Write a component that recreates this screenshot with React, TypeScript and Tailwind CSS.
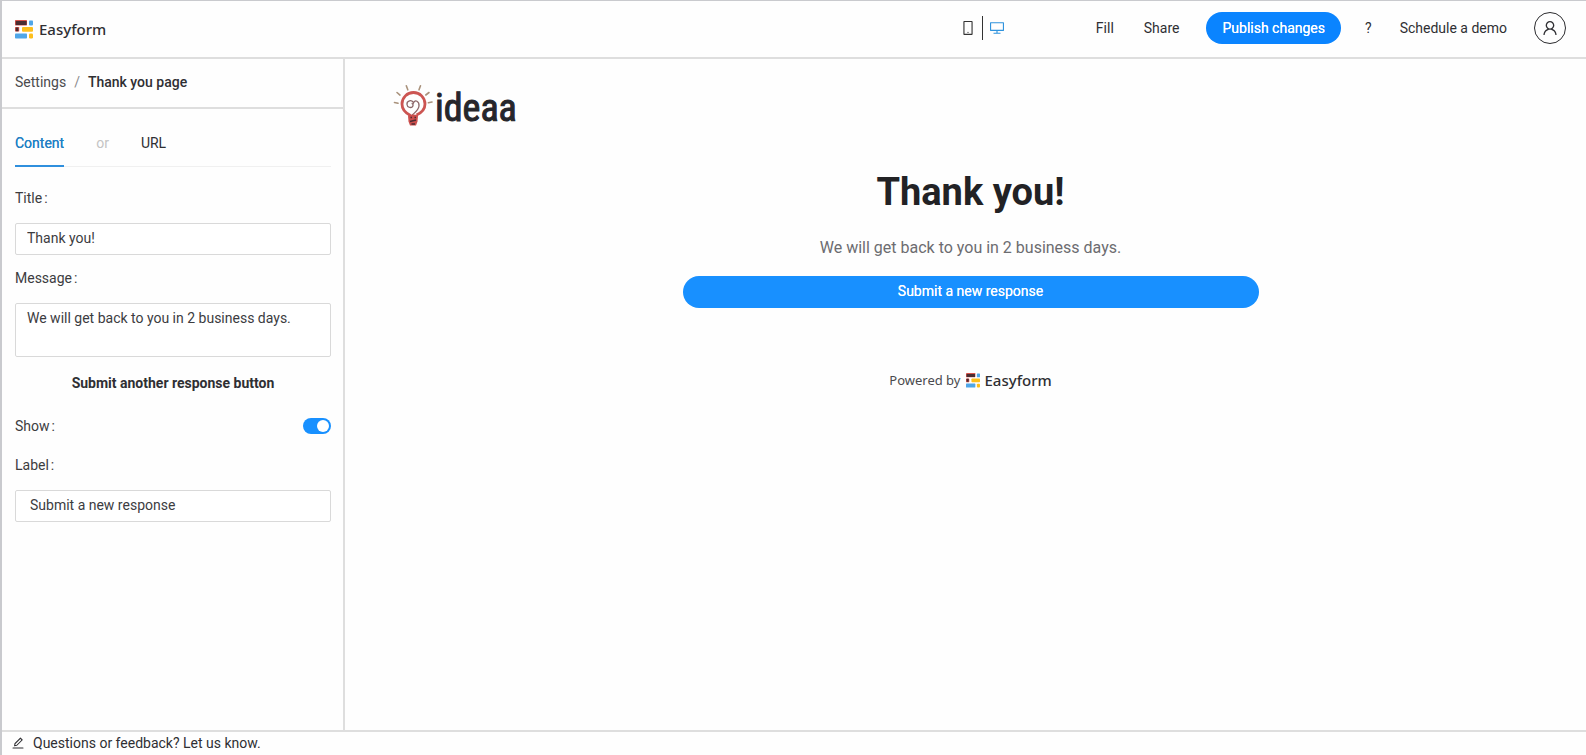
import { useState } from "react";
import {
  AiOutlineDesktop,
  AiOutlineEdit,
  AiOutlineMobile,
  AiOutlineUser,
} from "react-icons/ai";

function BrandMark({ className }: { className: string }) {
  return (
    <svg viewBox="0 0 18 19" className={className} aria-hidden="true">
      <rect x="0" y="0" width="12" height="5.4" rx="0.6" fill="#d9534a" />
      <rect x="0.8" y="1" width="10.8" height="4" rx="0.4" fill="#4a2c30" />
      <rect x="14" y="0.4" width="4" height="5" rx="0.8" fill="#4fa6e8" />
      <rect x="0" y="7" width="4.2" height="4.6" rx="0.6" fill="#d9534a" />
      <rect x="0.8" y="7.4" width="2.6" height="3.8" rx="0.4" fill="#4a2c30" />
      <rect x="7" y="7" width="11" height="4.8" rx="1" fill="#fdbf1c" />
      <rect x="0" y="13.4" width="12" height="5.2" rx="0.8" fill="#4fa6e8" />
      <rect x="14" y="13.6" width="4" height="4.8" rx="1.2" fill="#fdbf1c" />
    </svg>
  );
}

function Bulb() {
  return (
    <svg viewBox="0 0 40 42" className="h-[42px] w-10 shrink-0" fill="none" aria-hidden="true">
      <g stroke="#a9927c" strokeWidth="1.6" strokeLinecap="round">
        <path d="M1.500 18.500 5 19.300M4 8.500l3 2.600M13.300 1.800l1.500 4M27.500 1.800l-1.500 4M36 8.500l-3.200 2.500M39 18l-3.600.8" />
      </g>
      <path
        d="M17.500 31.500C11.500 28.500 9 25 9 20a11.500 11.500 0 1 1 23 0c0 5-3 8.500-8.500 11"
        stroke="#cc5552"
        strokeWidth="2.800"
      />
      <path
        d="M18.500 32c1.500-2.500 7-5 7.500-10 .4-4.600-4-7-5.500-3.200-1.500-3.800-7-2.200-6.500 1.700.3 2.800 3.700 3.800 5.400 2.200 1.300-1.300.5-3.200-.8-3.400"
        stroke="#8b6668"
        strokeWidth="1.300"
      />
      <path d="M15 31.500c3-1.500 7-1.500 10 0l-.5 6-1.500 4h-6l-1.500-4z" fill="#cc4f4d" />
      <path d="M17.500 33.500h1.500M21.500 33.500H23M17 37.500l6-1.500M18.500 40h3.500" stroke="#4c2c33" strokeWidth="1.300" />
    </svg>
  );
}

const labelClass = "block text-sm leading-[22px] text-[#3c3c3f]";
const fieldClass =
  "block w-full rounded-xs border border-[#d9d9d9] bg-white text-sm leading-[22px] text-[#3c3c3f] outline-none focus:border-[#1890ff]";

export default function App() {
  const [title, setTitle] = useState("Thank you!");
  const [message, setMessage] = useState("We will get back to you in 2 business days.");
  const [show, setShow] = useState(true);
  const [label, setLabel] = useState("Submit a new response");

  return (
    <div className="flex min-h-screen flex-col border-t border-l-2 border-[#c9cace] bg-[#fefefe] font-['Roboto',sans-serif] text-sm text-[#2f2f33]">
      <header className="flex h-[58px] items-center justify-between border-b-2 border-[#dedede] pr-5 pl-[13px]">
        <a href="#home" className="flex items-center gap-1.5">
          <BrandMark className="h-[19px] w-[18px]" />
          <span className="font-['Noto_Sans',sans-serif] text-[15px] leading-6 font-medium">Easyform</span>
        </a>
        <div className="flex items-center pb-0.5">
          <div className="mr-[91px] flex items-center">
            <button type="button" aria-label="Mobile preview" className="text-[#333]">
              <AiOutlineMobile size={16} />
            </button>
            <span className="mr-1.5 ml-1.5 h-6 w-px bg-[#333]" />
            <button type="button" aria-label="Desktop preview" className="text-[#2f93dd]">
              <AiOutlineDesktop size={16} />
            </button>
          </div>
          <nav className="flex items-center">
            <a href="#fill" className="mr-[30px]">Fill</a>
            <a href="#share" className="mr-[27px]">Share</a>
            <button type="button" className="mr-6 h-8 rounded-full bg-[#0a84ff] px-4 text-white text-shadow-[0_0_0.25px_currentColor]">
              Publish changes
            </button>
            <a href="#help" className="mr-7">?</a>
            <a href="#demo" className="mr-[27px]">Schedule a demo</a>
            <button
              type="button"
              aria-label="Account"
              className="flex size-8 items-center justify-center rounded-full border border-[#2b2b2e]"
            >
              <AiOutlineUser size={18} />
            </button>
          </nav>
        </div>
      </header>

      <div className="flex grow">
        <aside className="w-[343px] shrink-0 border-r-2 border-[#dedede]">
          <nav className="flex h-[50px] items-center border-b-2 border-[#dedede] px-[13px] pb-0.5" aria-label="Breadcrumb">
            <a href="#settings" className="text-[#4a4a4d]">Settings</a>
            <span className="mx-2 text-[#8c8c8c]">/</span>
            <span className="font-medium">Thank you page</span>
          </nav>
          <div className="pt-[11px] pr-3 pb-6 pl-[13px]">
            <div role="tablist" className="flex border-b border-[#f0f0f0] leading-[22px]">
              <button type="button" role="tab" aria-selected="true" className="-mb-px mr-8 border-b-2 border-[#2f8fdd] pt-3 pb-[11px] text-[#2380c4] text-shadow-[0_0_0.25px_currentColor]">
                Content
              </button>
              <span className="mr-8 py-3 text-[#c4c4c4]">or</span>
              <button type="button" role="tab" aria-selected="false" className="py-3">
                URL
              </button>
            </div>

            <div className="mt-5">
              <label htmlFor="title" className={labelClass}>Title<span className="ml-0.5">:</span></label>
              <input
                id="title"
                value={title}
                onChange={(e) => setTitle(e.target.value)}
                className={`${fieldClass} mt-3.5 h-8 px-[11px] pb-0.5`}
              />
            </div>
            <div className="mt-3">
              <label htmlFor="message" className={labelClass}>Message<span className="ml-0.5">:</span></label>
              <textarea
                id="message"
                value={message}
                onChange={(e) => setMessage(e.target.value)}
                className={`${fieldClass} mt-3.5 h-[54px] resize-none px-[11px] pt-[3px]`}
              />
            </div>
            <h2 className="mt-[15px] text-center leading-[22px] font-bold">Submit another response button</h2>
            <div className="mt-[21px] flex items-center justify-between">
              <label htmlFor="show" className={labelClass}>Show<span className="ml-0.5">:</span></label>
              <input
                id="show"
                type="checkbox"
                role="switch"
                checked={show}
                onChange={(e) => setShow(e.target.checked)}
                className="flex h-4 w-7 cursor-pointer appearance-none items-center rounded-full bg-[#bfbfbf] px-0.5 before:size-3 before:rounded-full before:bg-white before:content-[''] checked:justify-end checked:bg-[#1890ff]"
              />
            </div>
            <div className="mt-[17px]">
              <label htmlFor="label" className={labelClass}>Label<span className="ml-0.5">:</span></label>
              <input
                id="label"
                value={label}
                onChange={(e) => setLabel(e.target.value)}
                className={`${fieldClass} mt-3.5 h-8 px-3.5 pb-0.5`}
              />
            </div>
          </div>
        </aside>

        <main className="min-w-0 grow pl-2.5">
          <div className="flex items-start gap-0.5 pt-[25px] pl-[38px]">
            <Bulb />
            <span className="font-['Roboto_Condensed','Liberation_Sans_Narrow',sans-serif] text-[38px] leading-[49px] text-[#26262b] [-webkit-text-stroke:1px_#26262b]">
              ideaa
            </span>
          </div>
          <div className="mx-auto flex w-full max-w-[576px] flex-col items-center pt-9">
            <h1 className="text-[38px] leading-[47px] font-bold text-[#222225]">{title}</h1>
            <p className="mt-5 text-base leading-6 text-[#6c6c70]">{message}</p>
            {show && (
              <button type="button" className="mt-4 h-8 w-full rounded-full bg-[#1890ff] pb-0.5 text-white text-shadow-[0_0_0.25px_currentColor]">
                {label}
              </button>
            )}
            <div className="mt-[60px] flex items-center font-['Noto_Sans',sans-serif] leading-6">
              <span className="text-[13px] text-[#4a4a4d]">Powered by</span>
              <BrandMark className="mr-1 ml-1.5 h-[15px] w-3.5" />
              <span className="text-[15px] font-medium">Easyform</span>
            </div>
          </div>
        </main>
      </div>

      <footer className="flex h-[25px] items-center border-t-2 border-[#dedede] pb-0.5 pl-[9px]">
        <a href="#feedback" className="flex items-center gap-2">
          <AiOutlineEdit size={14} />
          Questions or feedback? Let us know.
        </a>
      </footer>
    </div>
  );
}
